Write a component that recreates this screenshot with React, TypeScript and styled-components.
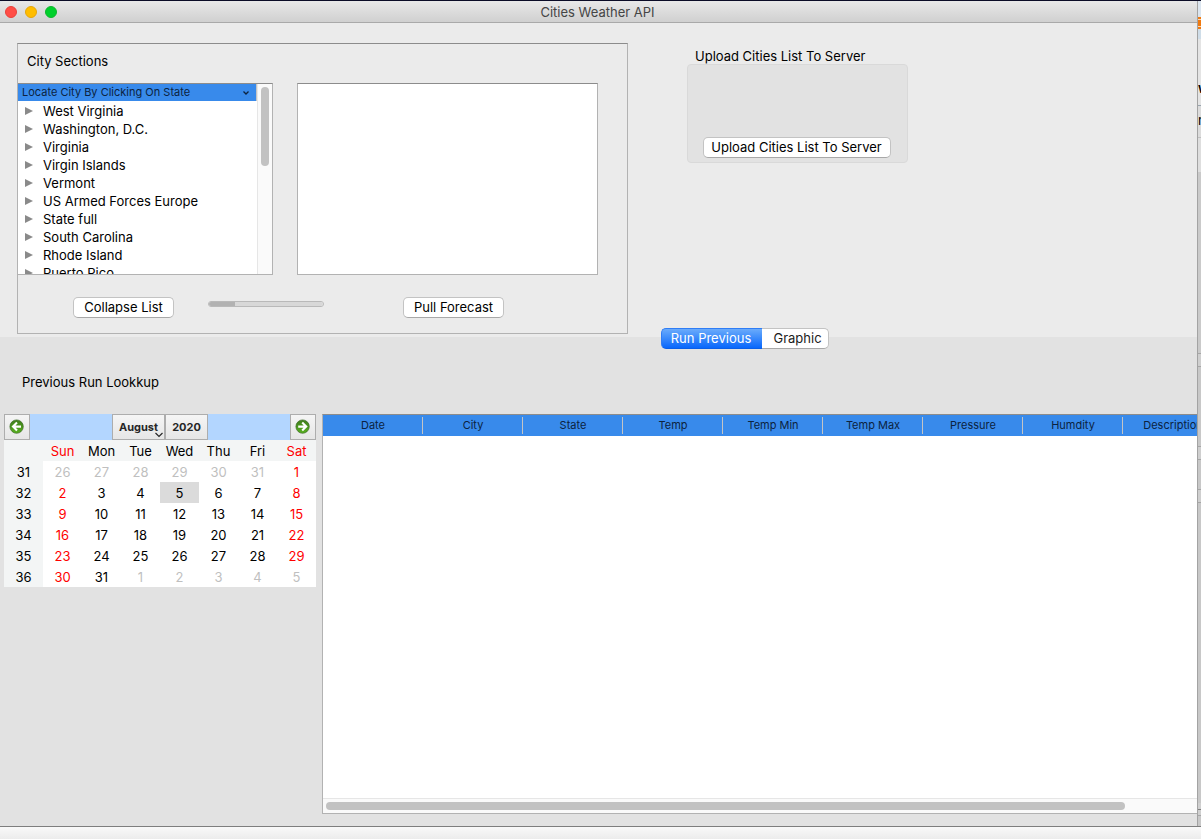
import React from 'react';
import styled, { createGlobalStyle, css } from 'styled-components';

const Global = createGlobalStyle`
  * { box-sizing: border-box; }
  body { margin: 0; background: #dedede; font-family: Inter, "Liberation Sans", sans-serif; font-size: 13px; line-height: 18px; color: #000; }
  button, select { font: inherit; color: inherit; margin: 0; padding: 0; }
  h1, h2, p { margin: 0; font: inherit; }
`;

const Desktop = styled.div`
  min-height: 100vh;
  display: flex;
  flex-direction: column;
  overflow: hidden;
  border-top: 1px solid #0a0b26;
`;
const Stage = styled.div`
  flex: 1;
  display: flex;
  background: #dfe3ea;
`;
const Window = styled.main`
  flex: 1;
  min-width: 0;
  display: flex;
  flex-direction: column;
  background: #ebebeb;
  border-radius: 5px 5px 0 0;
  overflow: hidden;
`;
const Behind = styled.div`
  flex: none;
  width: 4px;
  display: flex;
  flex-direction: column;
  border-left: 1px solid #a3a3a3;
  overflow: hidden;
`;
const Slice = styled.div<{ $h?: number; $bg: string; $line?: string; $bold?: boolean }>`
  flex: ${p => (p.$h ? 'none' : '1')};
  height: ${p => (p.$h ? `${p.$h}px` : 'auto')};
  display: flex;
  align-items: flex-end;
  padding-bottom: ${p => (p.$line ? 8 : 0)}px;
  overflow: hidden;
  background: ${p => p.$bg};
  border-bottom: ${p => (p.$line ? `1px solid ${p.$line}` : '0')};
  font-weight: ${p => (p.$bold ? 600 : 400)};
  line-height: 17px;
`;
const Rule = styled(Slice)`
  padding-bottom: 0;
`;
const Dock = styled.footer`
  flex: none;
  height: 13px;
  border-top: 1px solid #7e7e7e;
  background: linear-gradient(#f9f9f9, #ececec);
`;

const TitleBar = styled.header`
  position: relative;
  height: 22px;
  flex: none;
  display: flex;
  align-items: center;
  justify-content: center;
  padding-right: 2px;
  background: linear-gradient(#e8e8e8, #d0d0d0);
  border-bottom: 1px solid #a9a9a9;
  color: #454545;
`;
const Lights = styled.div`
  position: absolute;
  left: 5px;
  top: 5px;
  display: flex;
  gap: 8px;
`;
const Light = styled.button<{ $c: string; $edge: string }>`
  width: 12px;
  height: 12px;
  border-radius: 50%;
  border: 1px solid ${p => p.$edge};
  background: ${p => p.$c};
`;

const Upper = styled.section`
  display: flex;
  align-items: flex-start;
  gap: 59px;
  padding: 20px 17px 3px;
`;
const Frame = styled.section`
  flex: none;
  width: 611px;
  border: 1px solid #b2b2b2;
  border-top-color: #8c8c8c;
`;
const FrameTitle = styled.h2`
  height: 39px;
  padding: 8px 9px 0;
`;
const Boxes = styled.div`
  display: flex;
  gap: 24px;
`;
const box = css`
  height: 192px;
  background: #fff;
  border: 1px solid #b2b2b2;
  border-top-color: #8c8c8c;
`;
const Tree = styled.div`
  ${box}
  width: 255px;
  border-left: 0;
  display: flex;
  overflow: hidden;
`;
const TreeBody = styled.div`
  flex: 1;
`;
const TreeHead = styled.button`
  width: 100%;
  height: 17px;
  display: flex;
  align-items: center;
  justify-content: space-between;
  padding: 0 6px 0 4px;
  border: 0;
  border-right: 1px solid #c4c4c4;
  background: #388aeb;
  color: #0c2340;
  font-size: 11px;
  line-height: 17px;
`;
const TreeList = styled.ul`
  margin: 0;
  padding: 1px 0 0;
  list-style: none;
`;
const TreeRow = styled.li`
  display: flex;
  align-items: center;
  gap: 10px;
  height: 18px;
  padding-left: 7px;
  white-space: nowrap;
`;
const VScroll = styled.div`
  flex: none;
  width: 15px;
  padding: 3px;
  background: #fafafa;
  border-left: 1px solid #e6e6e6;
`;
const VThumb = styled.div`
  width: 8px;
  height: 79px;
  border-radius: 4px;
  background: #c2c2c2;
`;
const ForecastBox = styled.div`
  ${box}
  width: 301px;
`;
const Actions = styled.div`
  display: flex;
  align-items: flex-start;
  padding: 22px 55px 15px;
`;
const PushButton = styled.button<{ $w: number }>`
  width: ${p => p.$w}px;
  height: 21px;
  padding-bottom: 1px;
  border: 1px solid #c3c3c3;
  border-bottom-color: #a8a8a8;
  border-radius: 5px;
  background: #fff;
  line-height: 18px;
  white-space: nowrap;
`;
const Progress = styled.progress`
  appearance: none;
  width: 116px;
  height: 6px;
  margin: 4px 79px 0 34px;
  border: 1px solid #b9b9b9;
  border-radius: 3px;
  overflow: hidden;
  background: #d8d8d8;
  &::-webkit-progress-bar { background: #d8d8d8; }
  &::-webkit-progress-value { background: #b2b2b2; }
`;

const Upload = styled.section`
  width: 221px;
  padding-top: 4px;
`;
const UploadTitle = styled.h2`
  height: 17px;
  padding-left: 8px;
`;
const UploadBox = styled.div`
  height: 99px;
  display: flex;
  align-items: flex-end;
  justify-content: center;
  padding: 0 2px 4px 0;
  background: #e2e2e2;
  border: 1px solid #d9d9d9;
  border-radius: 4px;
`;

const Lower = styled.section`
  flex: 1;
  display: flex;
  flex-direction: column;
  background: #e2e2e2;
`;
const Tabs = styled.div`
  display: flex;
  align-self: flex-start;
  margin: -9px 0 0 661px;
`;
const Tab = styled.button<{ $on?: boolean }>`
  width: ${p => (p.$on ? 101 : 67)}px;
  height: 21px;
  line-height: 18px;
  border: 1px solid ${p => (p.$on ? '#2f7df5' : '#c3c3c3')};
  border-bottom-color: ${p => (p.$on ? '#0a5fe8' : '#a8a8a8')};
  border-radius: ${p => (p.$on ? '5px 0 0 5px' : '0 5px 5px 0')};
  border-left-width: ${p => (p.$on ? 1 : 0)}px;
  border-right-width: ${p => (p.$on ? 0 : 1)}px;
  background: ${p => (p.$on ? 'linear-gradient(#6aabfb, #0867fc)' : '#fff')};
  color: ${p => (p.$on ? '#fff' : '#1c1c1c')};
  padding: ${p => (p.$on ? '0 2px 1px 0' : '0 0 1px 5px')};
`;
const LookupTitle = styled.h2`
  padding: 24px 22px 23px;
`;
const Results = styled.div`
  flex: 1;
  display: flex;
  align-items: flex-start;
  gap: 6px;
  padding: 0 0 12px 4px;
`;
const Calendar = styled.section`
  flex: none;
  width: 312px;
`;
const CalNav = styled.div`
  display: flex;
  justify-content: space-between;
  height: 26px;
  background: #b3d6ff;
`;
const navButton = css`
  height: 26px;
  border: 1px solid #adadad;
  background: linear-gradient(#f5f5f5, #e6e6e6);
  font-size: 11px;
  font-weight: 700;
  color: #262626;
`;
const ArrowButton = styled.button`
  ${navButton}
  width: 26px;
  display: flex;
  align-items: center;
  justify-content: center;
`;
const Period = styled.div`
  display: flex;
`;
const MonthField = styled.label`
  position: relative;
  display: flex;
  svg { position: absolute; right: 1px; bottom: 2px; pointer-events: none; }
`;
const MonthSelect = styled.select`
  ${navButton}
  appearance: none;
  width: 53px;
  border-radius: 0;
  text-align: center;
  text-align-last: center;
`;
const YearButton = styled.button`
  ${navButton}
  width: 43px;
`;
const DayTable = styled.table`
  width: 100%;
  table-layout: fixed;
  border-collapse: collapse;
  background: #fff;
  text-align: center;
  line-height: 20px;
`;
const HeadCell = styled.th<{ $red?: boolean }>`
  padding: 1px 0 0;
  font-weight: 400;
  background: #f3f5f5;
  color: ${p => (p.$red ? '#f00' : '#000')};
`;
const DayCell = styled.td<{ $tone: string; $today?: boolean }>`
  padding: 1px 0 0;
  color: ${p => p.$tone};
  background: ${p => (p.$today ? '#dbdbdb' : 'transparent')};
`;
const Grid = styled.div`
  flex: 1;
  min-width: 0;
  align-self: stretch;
  display: flex;
  flex-direction: column;
  background: #fff;
  border: 1px solid #b2b2b2;
  border-top-color: #8c8c8c;
  border-right: 0;
`;
const GridView = styled.div`
  flex: 1;
  overflow: hidden;
`;
const DataTable = styled.table`
  width: 900px;
  min-width: 100%;
  table-layout: fixed;
  border-collapse: collapse;
  background: #388aeb;
`;
const DataHead = styled.th`
  width: 100px;
  height: 21px;
  padding: 0;
  font-size: 11px;
  font-weight: 400;
  line-height: 17px;
  color: #0c2340;
  background: linear-gradient(#c4c4c4, #c4c4c4) right 2px / 1px 17px no-repeat;
`;
const HScroll = styled.div`
  flex: none;
  height: 15px;
  padding: 3px;
  background: #fafafa;
  border-top: 1px solid #e6e6e6;
`;
const HThumb = styled.div`
  width: 92%;
  height: 8px;
  border-radius: 4px;
  background: #c2c2c2;
`;

const states = ['West Virginia', 'Washington, D.C.', 'Virginia', 'Virgin Islands', 'Vermont', 'US Armed Forces Europe', 'State full', 'South Carolina', 'Rhode Island', 'Puerto Rico'];
const days = ['Sun', 'Mon', 'Tue', 'Wed', 'Thu', 'Fri', 'Sat'];
const weeks = [
  [26, 27, 28, 29, 30, 31, 1],
  [2, 3, 4, 5, 6, 7, 8],
  [9, 10, 11, 12, 13, 14, 15],
  [16, 17, 18, 19, 20, 21, 22],
  [23, 24, 25, 26, 27, 28, 29],
  [30, 31, 1, 2, 3, 4, 5],
];
const columns = ['Date', 'City', 'State', 'Temp', 'Temp Min', 'Temp Max', 'Pressure', 'Humdity', 'Description'];

const tone = (week: number, day: number, value: number) => {
  if ((week === 0 && value > 7) || (week === 5 && value < 7)) return '#bfbfbf';
  return day === 0 || day === 6 ? '#f00' : '#000';
};

const RoundArrow = ({ left }: { left?: boolean }) => (
  <svg width="16" height="16" viewBox="0 0 16 16" aria-hidden="true">
    <defs>
      <linearGradient id={left ? 'ballL' : 'ballR'} x1="0" y1="0" x2="0" y2="1">
        <stop offset="0" stopColor="#3f7d1c" />
        <stop offset="1" stopColor="#58b01f" />
      </linearGradient>
    </defs>
    <circle cx="7.6" cy="7.6" r="6.7" fill={left ? 'url(#ballL)' : 'url(#ballR)'} stroke="#3d6b28" strokeWidth="0.7" />
    <path
      d={left ? 'M12 7.6H5M8 3.6L4 7.6l4 4' : 'M3.2 7.6h7M7.2 3.6l4 4-4 4'}
      fill="none" stroke="#fff" strokeWidth="2.1"
    />
  </svg>
);

export default function App() {
  return (
    <Desktop>
      <Global />
      <Stage>
        <Window>
          <TitleBar>
            <Lights>
              <Light $c="#ff4d46" $edge="#e8403a" aria-label="Close" />
              <Light $c="#ffbd00" $edge="#e5a50a" aria-label="Minimize" />
              <Light $c="#00d02c" $edge="#0fb52c" aria-label="Zoom" />
            </Lights>
            <h1>Cities Weather API</h1>
          </TitleBar>
          <Upper>
            <Frame>
              <FrameTitle>City Sections</FrameTitle>
              <Boxes>
                <Tree>
                  <TreeBody>
                    <TreeHead>
                      Locate City By Clicking On State
                      <svg width="8" height="6" viewBox="0 0 8 6" aria-hidden="true">
                        <path d="M1.5 1.5L4 4l2.5-2.5" fill="none" stroke="#0c2340" strokeWidth="1.3" />
                      </svg>
                    </TreeHead>
                    <TreeList>
                      {states.map(s => (
                        <TreeRow key={s}>
                          <svg width="8" height="10" viewBox="0 0 8 10" aria-hidden="true">
                            <path d="M0 1l8 4-8 4z" fill="#8a8a8a" />
                          </svg>
                          {s}
                        </TreeRow>
                      ))}
                    </TreeList>
                  </TreeBody>
                  <VScroll><VThumb /></VScroll>
                </Tree>
                <ForecastBox />
              </Boxes>
              <Actions>
                <PushButton $w={101}>Collapse List</PushButton>
                <Progress value={23} max={100} aria-label="Forecast progress" />
                <PushButton $w={101}>Pull Forecast</PushButton>
              </Actions>
            </Frame>
            <Upload>
              <UploadTitle>Upload Cities List To Server</UploadTitle>
              <UploadBox>
                <PushButton $w={188}>Upload Cities List To Server</PushButton>
              </UploadBox>
            </Upload>
          </Upper>
          <Lower>
            <Tabs role="tablist">
              <Tab role="tab" aria-selected="true" $on>Run Previous</Tab>
              <Tab role="tab" aria-selected="false">Graphic</Tab>
            </Tabs>
            <LookupTitle>Previous Run Lookkup</LookupTitle>
            <Results>
              <Calendar>
                <CalNav>
                  <ArrowButton aria-label="Previous month"><RoundArrow left /></ArrowButton>
                  <Period>
                    <MonthField>
                      <MonthSelect aria-label="Month" defaultValue="August">
                        <option>August</option>
                      </MonthSelect>
                      <svg width="10" height="6" viewBox="0 0 10 6" aria-hidden="true">
                        <path d="M1.5 1L5 4.5 8.5 1" fill="none" stroke="#262626" strokeWidth="1.2" />
                      </svg>
                    </MonthField>
                    <YearButton>2020</YearButton>
                  </Period>
                  <ArrowButton aria-label="Next month"><RoundArrow /></ArrowButton>
                </CalNav>
                <DayTable>
                  <thead>
                    <tr>
                      <HeadCell aria-label="Week" />
                      {days.map((d, i) => <HeadCell key={d} $red={i === 0 || i === 6}>{d}</HeadCell>)}
                    </tr>
                  </thead>
                  <tbody>
                    {weeks.map((w, i) => (
                      <tr key={i}>
                        <HeadCell scope="row">{31 + i}</HeadCell>
                        {w.map((v, j) => (
                          <DayCell key={j} $tone={tone(i, j, v)} $today={i === 1 && v === 5}>{v}</DayCell>
                        ))}
                      </tr>
                    ))}
                  </tbody>
                </DayTable>
              </Calendar>
              <Grid>
                <GridView>
                  <DataTable>
                    <thead><tr>{columns.map(c => <DataHead key={c}>{c}</DataHead>)}</tr></thead>
                  </DataTable>
                </GridView>
                <HScroll><HThumb /></HScroll>
              </Grid>
            </Results>
          </Lower>
        </Window>
        <Behind aria-hidden="true">
          <Rule $h={16} $bg="#dbe5ef" />
          <Rule $h={12} $bg="linear-gradient(#f07a10 2px, #fbd9b4 2px 3px, #f07a10 3px 9px, #fbd9b4 9px 10px, #f07a10 10px)" />
          <Rule $h={10} $bg="#cfdde8" />
          <Slice $h={67} $bg="#e4e4e4" $line="#98a4ae" $bold>w</Slice>
          <Slice $h={32} $bg="#dcdcdc" $line="#c0c0c0">n</Slice>
          <Rule $h={34} $bg="#dedede" />
          <Rule $h={167} $bg="#cacaca" />
          <Rule $h={15} $bg="#cacaca" $line="#a6a6a6" />
          <Rule $h={13} $bg="#cfcfcf" $line="#a6a6a6" />
          <Rule $h={80} $bg="#c8c8c8" $line="#a6a6a6" />
          <Rule $h={13} $bg="#cfcfcf" $line="#a6a6a6" />
          <Rule $h={30} $bg="#c8c8c8" $line="#a6a6a6" />
          <Rule $h={13} $bg="#cfcfcf" $line="#a6a6a6" />
          <Rule $bg="#c8c8c8" />
          <Rule $h={7} $bg="#cfcfcf" $line="#7e7e7e" />
          <Rule $h={6} $bg="#cfcfcf" $line="#a6a6a6" />
          <Rule $h={10} $bg="#c8c8c8" />
        </Behind>
      </Stage>
      <Dock />
    </Desktop>
  );
}
